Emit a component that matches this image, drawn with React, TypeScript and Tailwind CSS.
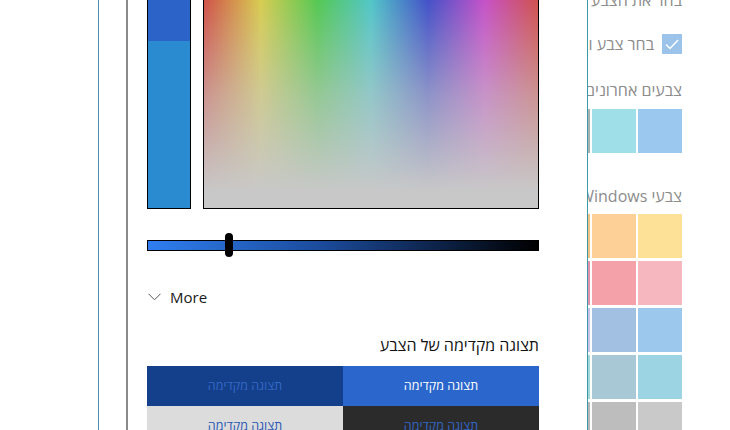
const font = { fontFamily: '"Open Sans", "Liberation Sans", "DejaVu Sans", sans-serif' };

const recent = ['#a6b3b3', '#9fe0e8', '#9bc8ee'];

const windowsColors = [
  ['#f2c184', '#fdd097', '#fde197'],
  ['#e392ae', '#f5a1a9', '#f6b7be'],
  ['#c9c2e8', '#a1c0e2', '#9dc8ee'],
  ['#a3d8d8', '#a9c8d5', '#9dd4e4'],
  ['#b8b8b8', '#bdbdbd', '#c9c9c9'],
];

function Swatch({ color }: { color: string }) {
  return <div className="h-[44px] w-[44px] shrink-0" style={{ backgroundColor: color }} />;
}

function ColorDialog() {
  return (
    <div className="w-[459px] shrink-0 overflow-hidden bg-white pl-[19px]" style={font}>
      <div className="flex h-[209px] w-[392px] gap-[12px]">
        <div className="flex w-[44px] flex-col border-x border-b border-black">
          <div className="h-[41px] bg-[#2b63c9]" />
          <div className="flex-1 bg-[#2a8bd0]" />
        </div>
        <div className="relative flex-1 border-x border-b border-black bg-[linear-gradient(to_right,#d0524a_0%,#d8cc52_17%,#55c853_34%,#52c6c8_50%,#4352c8_67%,#c652c8_84%,#d0524e_100%)]">
          <div className="absolute inset-0 bg-[linear-gradient(to_bottom,rgba(200,200,200,0)_0%,rgba(200,200,200,0.55)_45%,rgba(200,200,200,1)_92%)]" />
        </div>
      </div>

      <div className="relative mt-[31px] h-[11px] w-[392px] border border-black bg-[linear-gradient(to_right,#2f7ef0,#1b4a9a_45%,#000_100%)]">
        <div className="absolute left-[77px] top-[-8px] h-[24px] w-[8px] rounded-full bg-black" />
      </div>

      <div className="mt-[36px] flex h-[20px] items-center gap-[9px] pl-px">
        <svg width="13" height="8" viewBox="0 0 13 8" fill="none">
          <path d="M0.5 0.8 L6.5 6.8 L12.5 0.8" stroke="#555" strokeWidth="1" />
        </svg>
        <span className="text-[15px] leading-none text-[#1a1a1a]">More</span>
      </div>

      <div dir="rtl" className="mt-[27px] h-[22px] w-[392px] text-[16px] leading-[22px] text-[#111]">
        תצוגה מקדימה של הצבע
      </div>

      <div dir="ltr" className="mt-[10px] grid w-[392px] grid-cols-2 text-[12.5px]">
        <div className="flex h-[40px] items-center justify-center bg-[#133f8b] text-[#3568c4]">תצוגה מקדימה</div>
        <div className="flex h-[40px] items-center justify-center bg-[#2a66cc] text-white">תצוגה מקדימה</div>
        <div className="flex h-[40px] items-center justify-center bg-[#dcdcdc] text-[#2a58b4]">תצוגה מקדימה</div>
        <div className="flex h-[40px] items-center justify-center bg-[#2b2b2b] text-[#3266c4]">תצוגה מקדימה</div>
      </div>
    </div>
  );
}

function SettingsBehind() {
  return (
    <div dir="rtl" className="flex-1 overflow-hidden bg-white pr-[48px] text-[16px] text-[#8c8c8c]" style={font}>
      <div className="-mt-[11px] h-[22px] whitespace-nowrap leading-[22px]">בחר את הצבע שלך</div>
      <div className="mt-[23px] flex h-[20px] items-center gap-[8px] whitespace-nowrap">
        <div className="flex h-[20px] w-[20px] shrink-0 items-center justify-center bg-[#9cc4ea]">
          <svg width="14" height="11" viewBox="0 0 14 11" fill="none">
            <path d="M1 5.5 L5 9.5 L13 1" stroke="white" strokeWidth="1.4" />
          </svg>
        </div>
        <span className="leading-none">בחר צבע ומבטא באופן אוטומטי</span>
      </div>
      <div className="mt-[25px] h-[22px] whitespace-nowrap leading-[22px]">צבעים אחרונים</div>
      <div className="mt-[8px] flex gap-[2px]">
        {recent.slice().reverse().map((c) => (
          <Swatch key={c} color={c} />
        ))}
      </div>
      <div className="mt-[32px] h-[22px] whitespace-nowrap leading-[22px]">צבעי Windows</div>
      <div className="mt-[7px] flex flex-col gap-[3px]">
        {windowsColors.map((row, i) => (
          <div key={i} className="flex gap-[2px]">
            {row.slice().reverse().map((c) => (
              <Swatch key={c} color={c} />
            ))}
          </div>
        ))}
      </div>
    </div>
  );
}

export default function App() {
  return (
    <div className="flex h-[430px] w-[730px] overflow-hidden bg-white">
      <div className="w-[98px] shrink-0 bg-white" />
      <div className="w-px shrink-0 bg-[#4b8db3]" />
      <div className="w-[27px] shrink-0 bg-white" />
      <div className="w-[2px] shrink-0 bg-[#8a8a8a]" />
      <ColorDialog />
      <div className="w-px shrink-0 bg-[#3d99a3]" />
      <SettingsBehind />
    </div>
  );
}
